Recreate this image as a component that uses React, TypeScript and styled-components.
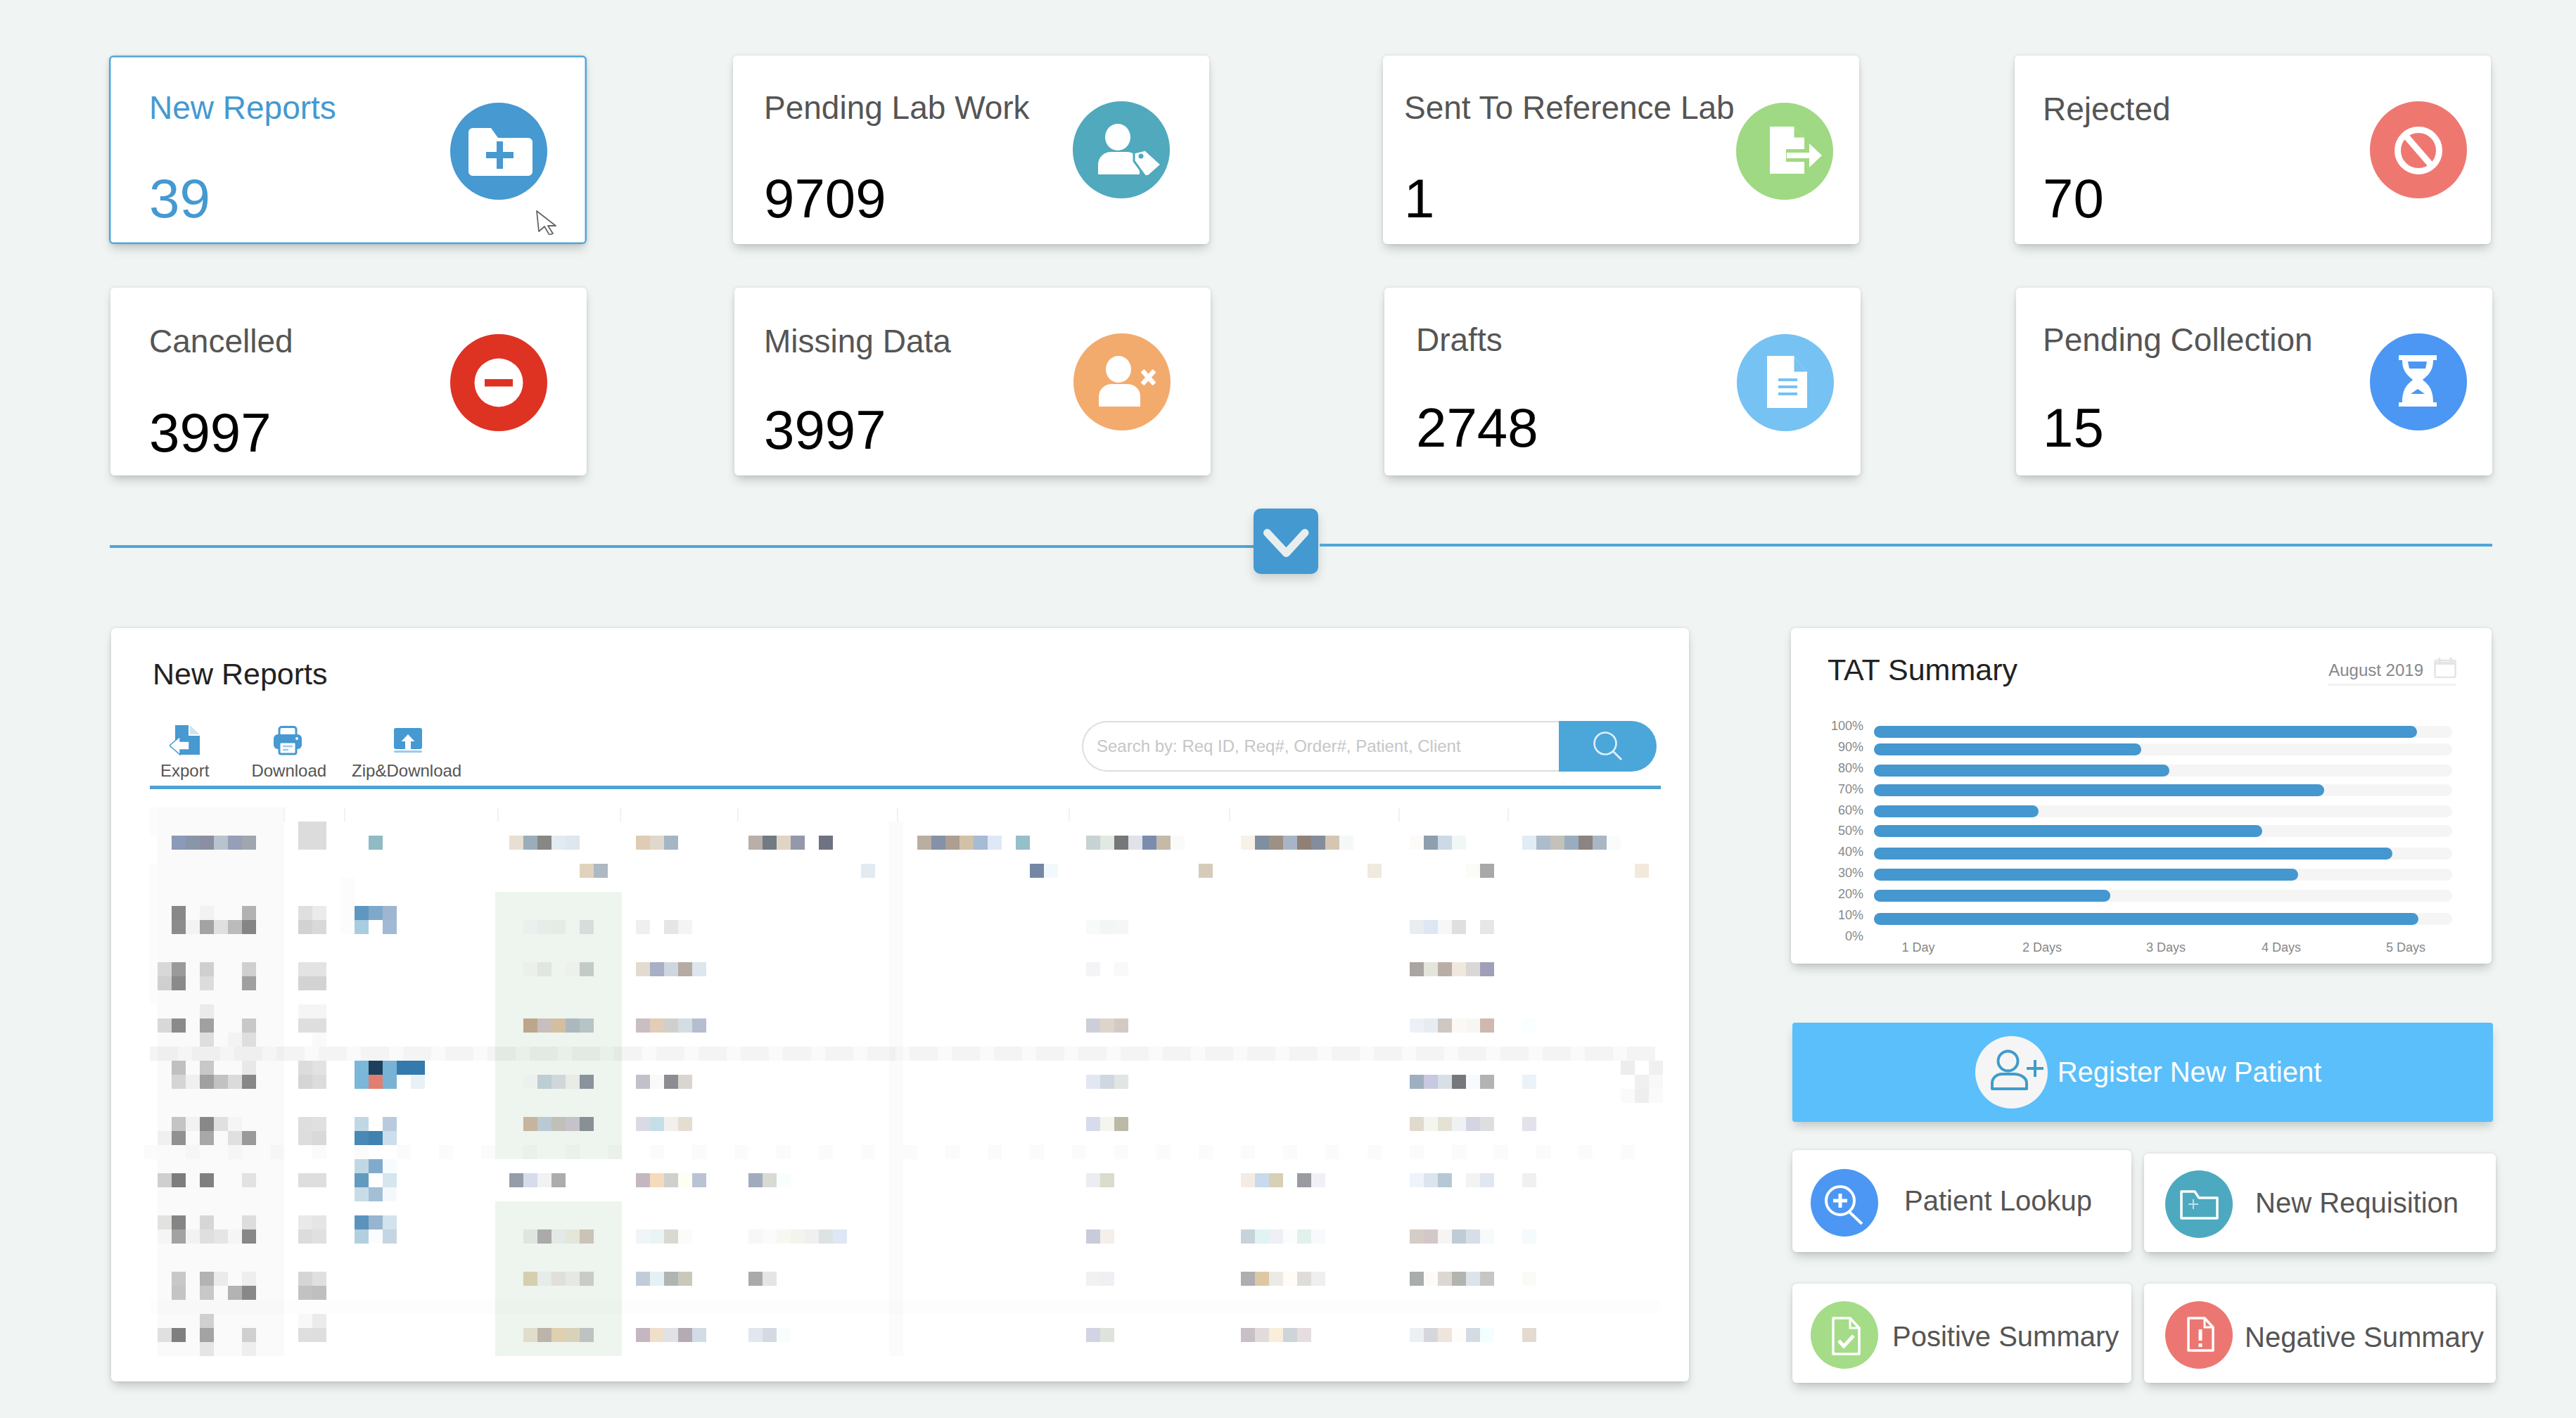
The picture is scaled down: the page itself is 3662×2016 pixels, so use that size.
import React from 'react';
import styled, { createGlobalStyle } from 'styled-components';

const GlobalStyle = createGlobalStyle`
  html, body {
    margin: 0;
    background: #f0f4f3;
    font-family: "Liberation Sans", Arial, sans-serif;
  }
  * { box-sizing: border-box; }
`;

const cardShadow = '0 9px 14px -3px rgba(60, 70, 70, 0.26), 0 0 5px rgba(60, 70, 70, 0.14)';

const Page = styled.div`
  width: 3662px;
  height: 2016px;
  padding-top: 79px;
  overflow: hidden;
  background: #f0f4f3;
`;

const StatRow = styled.div<{ $left: number; $height: number }>`
  display: grid;
  grid-template-columns: 887px 924px 898px 677px;
  padding-left: ${(p) => p.$left}px;
  height: ${(p) => p.$height}px;
  & + & { margin-top: 62px; }
`;

const StatCard = styled.div<{ $active?: boolean; $pad: number; $right: number }>`
  position: relative;
  display: flex;
  justify-content: space-between;
  align-items: flex-start;
  width: ${(p) => (p.$active ? 679 : 677)}px;
  height: 100%;
  padding: 0 ${(p) => p.$right}px 0 ${(p) => p.$pad}px;
  background: #fff;
  border-radius: 6px;
  box-shadow: ${(p) => (p.$active ? `inset 0 0 0 2.5px #54a6d8, ${cardShadow}` : cardShadow)};
`;

const StatText = styled.div<{ $top: number }>`
  padding-top: ${(p) => p.$top}px;
`;

const StatTitle = styled.div<{ $active?: boolean }>`
  font-size: 46px;
  line-height: 50px;
  white-space: nowrap;
  color: ${(p) => (p.$active ? '#4499d2' : '#555')};
`;

const StatValue = styled.div<{ $active?: boolean; $gap: number }>`
  margin-top: ${(p) => p.$gap}px;
  font-size: 78px;
  line-height: 80px;
  color: ${(p) => (p.$active ? '#4499d2' : '#000')};
`;

const StatIcon = styled.svg<{ $top: number }>`
  flex: none;
  width: 138px;
  height: 138px;
  margin-top: ${(p) => p.$top}px;
`;

const Cursor = styled.svg`
  position: absolute;
  left: 605px;
  top: 219px;
  width: 34px;
  height: 36px;
`;

const DividerRow = styled.div`
  display: flex;
  width: 3387px;
  margin: 47px 0 0 156px;
`;

const DividerLine = styled.div<{ $width?: number; $top: number }>`
  flex: ${(p) => (p.$width ? `none` : 1)};
  width: ${(p) => (p.$width ? `${p.$width}px` : 'auto')};
  height: 4px;
  margin-top: ${(p) => p.$top}px;
  background: #4fa6d8;
`;

const CollapseButton = styled.button`
  flex: none;
  display: flex;
  align-items: center;
  justify-content: center;
  width: 92px;
  height: 93px;
  margin-right: 2px;
  padding: 0;
  border: 0;
  border-radius: 10px;
  background: #4499d1;
  box-shadow: 0 7px 14px rgba(60, 70, 70, 0.2);
`;

const LowerRow = styled.div`
  display: flex;
  align-items: flex-start;
  margin: 77px 0 0 158px;
`;

const TablePanel = styled.section`
  flex: none;
  width: 2243px;
  height: 1071px;
  padding: 40px 37px 0 46px;
  background: #fff;
  border-radius: 6px;
  box-shadow: ${cardShadow};
`;

const PanelTitle = styled.h2<{ $indent?: number }>`
  margin: 0;
  margin-left: ${(p) => p.$indent ?? 0}px;
  font-size: 43px;
  line-height: 50px;
  font-weight: 400;
  color: #222;
`;

const Toolbar = styled.div`
  display: flex;
  justify-content: space-between;
  align-items: flex-start;
  height: 92px;
  margin-top: 42px;
  padding: 0 9px 0 9px;
`;

const Tools = styled.div`
  display: flex;
  padding-top: 6px;
`;

const ToolItem = styled.div<{ $left: number }>`
  display: flex;
  flex-direction: column;
  align-items: center;
  margin-left: ${(p) => p.$left}px;
  font-size: 24px;
  line-height: 28px;
  color: #555;
  white-space: nowrap;
  svg {
    display: block;
    width: 44px;
    height: 44px;
    margin-bottom: 7px;
  }
`;

const SearchBox = styled.div`
  display: flex;
  width: 817px;
  height: 72px;
`;

const SearchInput = styled.input`
  flex: 1;
  min-width: 0;
  padding: 0 0 0 19px;
  border: 2px solid #dedede;
  border-right: 0;
  border-radius: 36px 0 0 36px;
  outline: none;
  font-family: inherit;
  font-size: 24px;
  color: #555;
  &::placeholder { color: #c6c6c6; opacity: 1; }
`;

const SearchButton = styled.button`
  flex: none;
  display: flex;
  align-items: center;
  justify-content: center;
  width: 139px;
  padding: 0;
  border: 0;
  border-radius: 0 36px 36px 0;
  background: #4ba6da;
`;

const AccentLine = styled.div`
  height: 5px;
  margin: 0 3px 6px 9px;
  background: #4fa3d2;
`;

const Mosaic = styled.svg`
  display: block;
`;

const SideColumn = styled.div`
  flex: none;
  width: 1002px;
  margin-left: 145px;
`;

const TatPanel = styled.section`
  width: 996px;
  height: 477px;
  padding: 34px 50px 0 52px;
  background: #fff;
  border-radius: 6px;
  box-shadow: ${cardShadow};
`;

const TatHead = styled.div`
  display: flex;
  justify-content: space-between;
  align-items: flex-start;
  height: 50px;
`;

const DatePicker = styled.div`
  display: flex;
  align-items: flex-start;
  gap: 15px;
  margin-top: 8px;
  padding-bottom: 1px;
  border-bottom: 3px solid #f1f1f1;
  font-size: 24px;
  line-height: 36px;
  color: #888;
`;

const Chart = styled.div`
  margin: 45px 0 0 2px;
`;

const ChartRow = styled.div`
  display: grid;
  grid-template-columns: 49px 822px;
  column-gap: 15px;
  height: 29.9px;
`;

const AxisText = styled.div`
  font-size: 18px;
  line-height: 20px;
  color: #888;
  text-align: right;
  white-space: nowrap;
`;

const BarTrack = styled.div<{ $nudge: number }>`
  height: 17px;
  margin-top: ${(p) => 9.5 + p.$nudge}px;
  border-radius: 9px;
  background: #f5f5f5;
`;

const BarFill = styled.div`
  height: 100%;
  border-radius: 9px;
  background: #4497cf;
`;

const DayAxis = styled.div`
  display: grid;
  grid-template-columns: 176px 176px 164px 177px 60px;
  padding: 16px 0 0 33px;
`;

const DayLabel = styled(AxisText)`
  width: 60px;
  text-align: center;
`;

const RegisterButton = styled.button`
  display: flex;
  align-items: center;
  justify-content: center;
  gap: 14px;
  width: 996px;
  height: 141px;
  margin: 84px 0 0 2px;
  padding: 0 0 0 16px;
  border: 0;
  border-radius: 4px;
  background: #5abffb;
  box-shadow: 0 8px 14px -3px rgba(60, 70, 70, 0.28);
  font-family: inherit;
  font-size: 40px;
  color: #fff;
`;

const RegisterBadge = styled.svg`
  width: 103px;
  height: 103px;
`;

const ActionGrid = styled.div`
  display: grid;
  grid-template-columns: 482px 500px;
  column-gap: 18px;
  row-gap: 45px;
  align-items: end;
  margin: 40px 0 0 2px;
`;

const ActionCard = styled.div<{ $height: number; $left: number; $gap: number; $textTop: number }>`
  display: flex;
  align-items: center;
  gap: ${(p) => p.$gap}px;
  height: ${(p) => p.$height}px;
  padding-left: ${(p) => p.$left}px;
  background: #fff;
  border-radius: 6px;
  box-shadow: ${cardShadow};
  font-size: 40px;
  color: #555;
  white-space: nowrap;
  span { padding-top: ${(p) => p.$textTop}px; }
`;

const ActionIcon = styled.svg`
  flex: none;
  width: 96px;
  height: 96px;
  margin-top: 4px;
`;

const Person = ({ fill = '#fff' }: { fill?: string }) => (
  <>
    <ellipse cx="64" cy="51" rx="18" ry="19" fill={fill} />
    <path d="M36 104V90c0-11 9-18 18-18h22c11 0 19 7 19 18v14z" fill={fill} />
  </>
);

type Stat = {
  title: string;
  value: string;
  pad: number;
  right: number;
  titleTop: number;
  gap: number;
  iconTop: number;
  color: string;
  glyph: React.ReactNode;
  active?: boolean;
};

const topStats: Stat[] = [
  {
    title: 'New Reports', value: '39', pad: 57, right: 56, titleTop: 49, gap: 64, iconTop: 67, color: '#4699d1', active: true,
    glyph: (
      <>
        <path d="M26 42a6 6 0 0 1 6-6h26l10 14h43a6 6 0 0 1 6 6v42a6 6 0 0 1-6 6H32a6 6 0 0 1-6-6z" fill="#fff" />
        <path d="M66 55h9v15h15v9H75v15h-9V79H51v-9h15z" fill="#4699d1" />
      </>
    ),
  },
  {
    title: 'Pending Lab Work', value: '9709', pad: 44, right: 56, titleTop: 49, gap: 64, iconTop: 65, color: '#50a9bd',
    glyph: (
      <>
        <Person />
        <path d="M87 73l16-4 23 21-18 16-5 1-16-22z" fill="#fff" stroke="#50a9bd" strokeWidth="3" />
        <circle cx="97" cy="78" r="3.5" fill="#50a9bd" />
      </>
    ),
  },
  {
    title: 'Sent To Reference Lab', value: '1', pad: 30, right: 37, titleTop: 49, gap: 64, iconTop: 67, color: '#9fd983',
    glyph: (
      <>
        <path d="M48 34h33l16 17v50H48z" fill="#fff" />
        <path d="M81 34v17h16" fill="#9fd983" stroke="#fff" strokeWidth="3" />
        <rect x="71" y="66" width="27" height="18" fill="#9fd983" />
        <rect x="72" y="71" width="33" height="8" fill="#fff" />
        <path d="M104 58l18 17-18 17z" fill="#fff" />
      </>
    ),
  },
  {
    title: 'Rejected', value: '70', pad: 40, right: 34, titleTop: 51, gap: 62, iconTop: 65, color: '#ee7870',
    glyph: (
      <>
        <circle cx="69" cy="70" r="29.5" fill="none" stroke="#fff" strokeWidth="9" />
        <path d="M50 48l38 44" stroke="#fff" strokeWidth="9" />
      </>
    ),
  },
];

const bottomStats: Stat[] = [
  {
    title: 'Cancelled', value: '3997', pad: 55, right: 56, titleTop: 51, gap: 65, iconTop: 66, color: '#de3223',
    glyph: (
      <>
        <circle cx="69" cy="69" r="34.5" fill="#fff" />
        <rect x="49" y="64" width="40" height="10.5" fill="#de3223" />
      </>
    ),
  },
  {
    title: 'Missing Data', value: '3997', pad: 42, right: 57, titleTop: 51, gap: 61, iconTop: 65, color: '#f2ab6d',
    glyph: (
      <>
        <Person />
        <path d="M98 53l17 19M115 53L98 72" stroke="#fff" strokeWidth="6.5" />
      </>
    ),
  },
  {
    title: 'Drafts', value: '2748', pad: 45, right: 38, titleTop: 49, gap: 60, iconTop: 66, color: '#76c2f3',
    glyph: (
      <>
        <path d="M43 31h37l20 24v50H43z" fill="#fff" />
        <path d="M80 31v24h20" fill="#76c2f3" stroke="#fff" strokeWidth="3" />
        <path d="M59 65h27M59 75h27M59 85h27" stroke="#76c2f3" strokeWidth="4" />
      </>
    ),
  },
  {
    title: 'Pending Collection', value: '15', pad: 38, right: 36, titleTop: 49, gap: 60, iconTop: 65, color: '#4b97f3',
    glyph: (
      <>
        <path d="M41 31h54v7h-5c0 16-8 22-15 28 7 6 15 12 15 32h5v6H41v-6h5c0-20 8-26 15-32-7-6-15-12-15-28h-5z" fill="#fff" />
        <path d="M54 40h27l-2 10H56zM68 79l10 7H58z" fill="#4b97f3" />
      </>
    ),
  },
];

// row, first column, hex colours ('-' leaves a gap)
const cells: [number, number, string][] = [
  [2, 11, 'dcdcdc dcdcdc'],
  [3, 2, '8a9ab8 8896a8 8c8fa3 b7c3cd 959fb8 a0a6ad - - - dcdcdc dcdcdc - - - 90bac4'],
  [3, 26, 'e8ded2 9badba 888784 e2ebf2 dde7ed - - - - dfccb4 e0d8cc a5b5c5'],
  [3, 43, 'b9aea8 747a84 e0d5c5 9398aa - 6f7282'],
  [3, 55, 'baaea2 8491a8 ac9e90 d2c0a8 a6bbd4 dfe9f5 - 95bfc9'],
  [3, 67, 'c7d2d4 e2e8e2 757779 dfe2e8 7b8dae c6b9a8 f9faf9'],
  [3, 78, 'f7f1e7 7f8ea1 9c9184 a8b5c6 918078 848d9c d5c6b4 f5f8f8'],
  [3, 90, 'fcfbf8 8e9fae ccdae7 f0f7f7'],
  [3, 98, 'e2ecf5 acbccb c2c2ba 98adc0 8c8481 a9b7c4 f9fbfc'],
  [5, 31, 'e0d2bc aeb8c2'],
  [5, 51, 'e2ebf2'],
  [5, 63, '7488a6 f2f9fd'],
  [5, 75, 'd5cbb8'],
  [5, 87, 'efe9de'],
  [5, 94, 'fdfbf5 a8a8a8'],
  [5, 106, 'f3e9db'],
  [8, 2, '888888 - f2f2f2 - - b2b2b2 - - - dfdfdf ebebeb - - 5f97c2 7ea9cb 9fb6d0'],
  [9, 2, '8c8c8c f3f3f3 a3a3a3 e0e0e0 bbbbbb 858585 - - - d2d2d2 d9d9d9 - - a8cce0 - a2b9d6'],
  [9, 27, 'ecf0ec e6ecea e6ebe6 - d6dedb - - - eeeff1 - e5e5e6 f4f4f5'],
  [9, 67, 'f8f9fb f3f6f6 f5f6f5'],
  [9, 90, 'e8edf2 dde6f3 f5f7f9 dfdfdf - e8e7e8'],
  [12, 1, 'd8d8d8 9a9a9a - cfcfcf - - cfcfcf - - - e3e3e3 e3e3e3'],
  [12, 27, 'ecf0ec e0e6e0 - edf1ed c2cbc5 - - - e4dbd0 a8afc6 d0d6df b5aba2 dde5ee'],
  [12, 67, 'f4f4f6 - f9f9f9'],
  [12, 90, 'a9a5a0 e4e5dd b9aea5 f0e8de d9d8d6 a09fba'],
  [13, 1, 'cfcfcf 8a8a8a - dcdcdc - - a0a0a0 - - - d3d3d3 d3d3d3'],
  [15, 4, 'ebebeb - - - - - - f5f5f5 f5f5f5'],
  [16, 1, 'd8d8d8 8a8a8a - a0a0a0 - - c8c8c8 - - - dedede dedede'],
  [16, 27, 'bda68c c6bfbd d3bf9f adb7bf b5c4c4 - - - c9bec2 e3ccb8 cfcfcc d3dde2 b5bed0'],
  [16, 67, 'cccfda ddd5c9 d3cac6'],
  [16, 90, 'edf1f7 e7ecf2 cfc7c1 fcf8f3 f6f6f5 cfb8ad - - f9ffff'],
  [17, 4, 'dedede - f3f3f3 dedede - - - - fafafa'],
  [19, 2, 'c0c0c0 - c8c8c8 - - e8e8e8 - - - dcdcdc e2e2e2 - - 7ab7d8 1d3f5e 78b3d5 347aad 347aad'],
  [19, 105, 'ededed - f0f0f0'],
  [20, 2, 'd5d5d3 f0f0f0 a0a0a0 c2c2c2 dbdbdb 878787 - - - d5d5d5 dcdcdc - - 7ab7d8 e07f6f 78b3d5 - e8f1f7'],
  [20, 27, 'edf1ed bccdd4 d0d7d8 e9ece4 8a929c - - - c2c0cb fafafa 8d8c92 d9d6d0'],
  [20, 67, 'e2e7f2 cfd8e0 dfe6e3'],
  [20, 90, '9eafc0 c8c8e0 d8e0e5 76787b f8fbfd b3b3b3 - - ebf2f8'],
  [20, 106, 'f0f0f0 f8f8f8'],
  [21, 105, 'fafafa eeeeee fafafa'],
  [23, 2, 'c4c4c4 f2f2f2 888888 e0e0e0 f5f5f5 - - - - dedede e0e0e0 - - c0d8e5 - b8cbde'],
  [23, 27, 'c7b49e bac9d2 bfc0b8 c5c2ca 869095 - - - d9dae4 c4dee8 f2f0ec e5ddd2'],
  [23, 67, 'd6dcec f5f5f0 bcb9a9'],
  [23, 90, 'e0d9ce f5f5ef e5e1d5 eef2f5 d4d4e3 dcdee0 - - e3e1ea'],
  [24, 1, 'f0f0f0 919191 - a8a8a8 - e0e0e0 9a9a9a - - - dddddd d9d9d9 - - 4a88b5 4082b0 ccdeec'],
  [26, 15, 'c0d8e5 80abcd f6fbfd'],
  [27, 1, 'cfcfcf 7d7d7d - 808080 - - e2e2e2 - - - dedede dedede - - 629bc0 - d5e6ef'],
  [27, 26, '949eaa d6dceb f0f3f2 acadab - - - - - c5b7c2 f5dabb cfd0ce fefef3 b9c3d3 - - - a0acbe d7dbd3 f8fdfe'],
  [27, 67, 'ecedf2 d8ddcc'],
  [27, 78, 'f5ebe5 c8daec d8cfb7 fbffff 999aa2 f1f0f8'],
  [27, 90, 'eef4fb dce4ed b6c8d6 - f2f3f2 e0e7f0 - - f0f0f0'],
  [28, 15, 'c8dce8 a2bfd6 f5f8fa'],
  [30, 1, 'e2e2e0 858585 - d6d6d6 - - dddddd - - - e9e9e9 e5e5e5 - - 5c93bd 97b4d0 d2e3ed'],
  [31, 1, 'f5f5f5 a2a2a2 f2f2f2 dfdfdf e5e5e5 f5f5f5 888888 - - - dcdcdc e0e0e0 - - b2cfe0 fafcfe c4d6e4'],
  [31, 27, 'dfe6df aba9a9 e3e9e6 e4e6d9 cac3b8 - - - f1f5f8 e9f5f5 dad9d0 fbfbfa - - - - f7f7f6 fafbfb f8f8f3 f4f4ec f0f0f0 dde2e2 dde7f5'],
  [31, 67, 'c8cbda f4efeb'],
  [31, 78, 'c8d2da dff4f3 efeff6 fbfdfd e1f1ec f8f9fd'],
  [31, 90, 'd5ccc5 d3c8c8 f7f5f3 bfccd7 d7dee7 f7fafa - - f5fafc'],
  [34, 2, 'c8c8c6 - b3b3b3 ebebeb - eeeeee - - - d5d5d5 e0e0e0'],
  [34, 27, 'd5cfb0 e5ecea e0e0da e6e8e5 c9cbc5 - - - c1ccd8 e6f1f6 b0b5b3 cbc8ba - - - - a9aaa9 e4e5e6'],
  [34, 67, 'f3f1ef eef0f3'],
  [34, 78, 'aeaeb2 ddc8a4 eceae6 fefcf5 dedddb eeeff1'],
  [34, 90, 'a9adad fcfbf7 dcd7d0 b2b4b0 dde3ea c6c6c3 - - fbfbf6'],
  [35, 2, 'c4c4c4 - c8c8c8 - b3b3b3 888888 - - - c2c2c2 bfbfbf'],
  [37, 4, 'd0d0d0 - - - - - - f8f8f8 ebebeb'],
  [38, 1, 'e0e0e0 7f7f7f - a3a3a3 - - cfcfcf - - - dedede dedede'],
  [38, 27, 'e0decb bcb4a9 dfd0b0 d8d2ba bec3c1 - - - c5b7c2 f0dfcb e0e2e5 b4abb4 d1dce7 - - - e2e7ef d5dae2 f8fdfe'],
  [38, 67, 'd2d3e3 dfe4da'],
  [38, 78, 'c9bfc7 e1dcdb f9eedb cdd5d8 e5dde0'],
  [38, 90, 'ecf0f5 d6d7de eee5dd fefdfa d5dbe3 f3feff - - e3dbd0'],
  [39, 4, 'e5e5e5 - - eeeeee'],
];

const ticks = [199, 285, 503, 677, 844, 1071, 1315, 1543, 1784, 1939];

const ReportMosaic = () => (
  <Mosaic width="2160" height="820" viewBox="0 0 2160 820" shapeRendering="crispEdges">
    <rect x="20" y="20" width="180" height="780" fill="#fafafa" />
    <rect x="9" y="20" width="11" height="40" fill="#fcfcfc" />
    <rect x="9" y="100" width="11" height="200" fill="#fcfcfc" />
    <rect x="280" y="120" width="20" height="80" fill="#fcfcfc" />
    <rect x="1060" y="40" width="20" height="760" fill="#fbfbfb" />
    <rect x="500" y="140" width="180" height="380" fill="#eef4ee" />
    <rect x="500" y="580" width="180" height="220" fill="#eef4ee" />
    <rect x="9" y="720" width="2147" height="20" fill="#000" opacity="0.007" />
    {ticks.map((x) => (
      <rect key={x} x={x} y="20" width="2" height="20" fill="#f2f2f2" />
    ))}
    {Array.from({ length: 107 }, (_, i) => (
      <rect key={`b${i}`} x={i * 20 + 9} y="360" width="20" height="20" fill="#000" opacity={i % 3 === 2 ? 0.02 : 0.045} />
    ))}
    {Array.from({ length: 36 }, (_, i) => (
      <rect key={`f${i}`} x={i * 60} y="500" width="20" height="20" fill="#000" opacity="0.016" />
    ))}
    {cells.flatMap(([row, col, colors]) =>
      colors.split(' ').map((hex, i) =>
        hex === '-' ? null : (
          <rect key={`${row}-${col + i}`} x={(col + i) * 20} y={row * 20} width="20" height="20" fill={`#${hex}`} />
        ),
      ),
    )}
  </Mosaic>
);

const bars = [
  { label: '100%', size: 772, nudge: 0 },
  { label: '90%', size: 380, nudge: -4 },
  { label: '80%', size: 420, nudge: -4 },
  { label: '70%', size: 640, nudge: -6 },
  { label: '60%', size: 234, nudge: -6 },
  { label: '50%', size: 552, nudge: -8 },
  { label: '40%', size: 737, nudge: -6 },
  { label: '30%', size: 603, nudge: -6 },
  { label: '20%', size: 336, nudge: -6 },
  { label: '10%', size: 774, nudge: -3 },
];

const StatTile = ({ stat }: { stat: Stat }) => (
  <StatCard $active={stat.active} $pad={stat.pad} $right={stat.right}>
    <StatText $top={stat.titleTop}>
      <StatTitle $active={stat.active}>{stat.title}</StatTitle>
      <StatValue $active={stat.active} $gap={stat.gap}>{stat.value}</StatValue>
    </StatText>
    <StatIcon $top={stat.iconTop} viewBox="0 0 138 138">
      <circle cx="69" cy="69" r="69" fill={stat.color} />
      {stat.glyph}
    </StatIcon>
    {stat.active && (
      <Cursor viewBox="0 0 34 36">
        <path d="M3 2l27 21-11 0 7 11-5 2-7-12-8 7z" fill="#fff" stroke="#666" strokeWidth="1.8" strokeLinejoin="round" />
      </Cursor>
    )}
  </StatCard>
);

export default function App() {
  return (
    <Page>
      <GlobalStyle />
      <StatRow $left={155} $height={268}>
        {topStats.map((s) => <StatTile key={s.title} stat={s} />)}
      </StatRow>
      <StatRow $left={157} $height={267}>
        {bottomStats.map((s) => <StatTile key={s.title} stat={s} />)}
      </StatRow>

      <DividerRow>
        <DividerLine $width={1626} $top={52} />
        <CollapseButton aria-label="Collapse">
          <svg width="70" height="60" viewBox="0 0 70 60">
            <path d="M8.5 17.5l27 29 26.5-29" fill="none" stroke="#e8eeee" strokeWidth="11" strokeLinecap="round" strokeLinejoin="round" />
          </svg>
        </CollapseButton>
        <DividerLine $top={50} />
      </DividerRow>

      <LowerRow>
        <TablePanel>
          <PanelTitle $indent={13}>New Reports</PanelTitle>
          <Toolbar>
            <Tools>
              <ToolItem $left={15}>
                <svg viewBox="0 0 44 44">
                  <path d="M8 0h20l15 14v28H15V30H8z" fill="#4699d1" />
                  <path d="M28 0v14h15" fill="#cfe4f2" stroke="#fff" strokeWidth="2" />
                  <path d="M15 16L0 29l15 13v-7h13V23H15z" fill="#fff" stroke="#4699d1" strokeWidth="1.5" />
                </svg>
                Export
              </ToolItem>
              <ToolItem $left={60}>
                <svg viewBox="0 0 44 44">
                  <path d="M8 14V6a3.5 3.5 0 0 1 3.5-3.5h17A3.5 3.5 0 0 1 32 6v8" fill="none" stroke="#4699d1" strokeWidth="3" />
                  <rect x="0" y="13" width="40" height="21" rx="6" fill="#4699d1" />
                  <circle cx="33" cy="19" r="2" fill="#fff" />
                  <rect x="8" y="24" width="24" height="17" rx="2.5" fill="#fff" stroke="#4699d1" strokeWidth="3" />
                  <path d="M13 30h14M13 35h8" stroke="#9ccbe6" strokeWidth="2.5" />
                </svg>
                Download
              </ToolItem>
              <ToolItem $left={36}>
                <svg viewBox="0 0 44 44">
                  <rect x="4" y="4" width="40" height="30" rx="3" fill="#4699d1" />
                  <rect x="4" y="36" width="40" height="3" rx="1.5" fill="#9ccbe6" />
                  <path d="M24 13l9.5 10H28v12h-8V23h-5.500z" fill="#fff" />
                </svg>
                Zip&amp;Download
              </ToolItem>
            </Tools>
            <SearchBox>
              <SearchInput placeholder="Search by: Req ID, Req#, Order#, Patient, Client" />
              <SearchButton aria-label="Search">
                <svg width="48" height="48" viewBox="0 0 48 48">
                  <circle cx="20" cy="20" r="15.5" fill="none" stroke="#dff0f9" strokeWidth="2.6" />
                  <path d="M31 31l12 12" stroke="#dff0f9" strokeWidth="2.8" />
                </svg>
              </SearchButton>
            </SearchBox>
          </Toolbar>
          <AccentLine />
          <ReportMosaic />
        </TablePanel>

        <SideColumn>
          <TatPanel>
            <TatHead>
              <PanelTitle>TAT Summary</PanelTitle>
              <DatePicker>
                August 2019
                <svg width="32" height="29" viewBox="0 0 32 29">
                  <rect x="1.500" y="4" width="29" height="24" rx="2" fill="none" stroke="#e4e4e4" strokeWidth="2.5" />
                  <path d="M1.500 8h29" stroke="#e4e4e4" strokeWidth="4" />
                  <path d="M8 0v6M24 0v6" stroke="#e4e4e4" strokeWidth="3" />
                </svg>
              </DatePicker>
            </TatHead>
            <Chart>
              {bars.map((b) => (
                <ChartRow key={b.label}>
                  <AxisText>{b.label}</AxisText>
                  <BarTrack $nudge={b.nudge}>
                    <BarFill style={{ width: `${(b.size / 822) * 100}%` }} />
                  </BarTrack>
                </ChartRow>
              ))}
              <ChartRow>
                <AxisText>0%</AxisText>
                <DayAxis>
                  {['1 Day', '2 Days', '3 Days', '4 Days', '5 Days'].map((d) => (
                    <DayLabel key={d}>{d}</DayLabel>
                  ))}
                </DayAxis>
              </ChartRow>
            </Chart>
          </TatPanel>

          <RegisterButton>
            <RegisterBadge viewBox="0 0 103 103">
              <circle cx="51.5" cy="51.5" r="51.5" fill="#f5f5f5" />
              <circle cx="46.5" cy="35.5" r="14" fill="none" stroke="#3f9ccc" strokeWidth="4" />
              <path d="M24 75V67c0-8 7-13 14-13h17c9 0 18 5 18 13v8z" fill="none" stroke="#3f9ccc" strokeWidth="4" strokeLinejoin="round" />
              <path d="M73 46h24M85 34v24" stroke="#3f9ccc" strokeWidth="4" />
            </RegisterBadge>
            Register New Patient
          </RegisterButton>

          <ActionGrid>
            <ActionCard $height={145} $left={26} $gap={37} $textTop={0}>
              <ActionIcon viewBox="0 0 96 96">
                <circle cx="48" cy="48" r="48" fill="#4b97f3" />
                <circle cx="42" cy="45" r="20" fill="none" stroke="#fff" strokeWidth="4" />
                <path d="M32 45h20M42 35v20" stroke="#fff" strokeWidth="5" />
                <path d="M55 61l18 17" stroke="#fff" strokeWidth="4" />
              </ActionIcon>
              <span>Patient Lookup</span>
            </ActionCard>
            <ActionCard $height={140} $left={30} $gap={32} $textTop={0}>
              <ActionIcon viewBox="0 0 96 96">
                <circle cx="48" cy="48" r="48" fill="#4da9bf" />
                <path d="M23 30h19l6 9h26v29H23z" fill="none" stroke="#fff" strokeWidth="3.5" strokeLinejoin="round" />
                <path d="M33 48h14M40 41v14" stroke="#bfe0e8" strokeWidth="2" />
              </ActionIcon>
              <span>New Requisition</span>
            </ActionCard>
            <ActionCard $height={141} $left={26} $gap={20} $textTop={10}>
              <ActionIcon viewBox="0 0 96 96">
                <circle cx="48" cy="48" r="48" fill="#a4dc88" />
                <path d="M32 24h24l13 14v37H32z" fill="none" stroke="#fff" strokeWidth="3.5" strokeLinejoin="round" />
                <path d="M56 24v14h13" fill="none" stroke="#fff" strokeWidth="3" />
                <path d="M40 56l7 8 14-15" fill="none" stroke="#fff" strokeWidth="5" />
              </ActionIcon>
              <span>Positive Summary</span>
            </ActionCard>
            <ActionCard $height={141} $left={30} $gap={17} $textTop={12}>
              <ActionIcon viewBox="0 0 96 96">
                <circle cx="48" cy="48" r="48" fill="#ec7772" />
                <path d="M33 24h23l12 13v33H33z" fill="none" stroke="#fff" strokeWidth="3.5" strokeLinejoin="round" />
                <path d="M56 24v13h12" fill="none" stroke="#fff" strokeWidth="3" />
                <path d="M50 40v16M50 60v5" stroke="#fff" strokeWidth="5" />
              </ActionIcon>
              <span>Negative Summary</span>
            </ActionCard>
          </ActionGrid>
        </SideColumn>
      </LowerRow>
    </Page>
  );
}
